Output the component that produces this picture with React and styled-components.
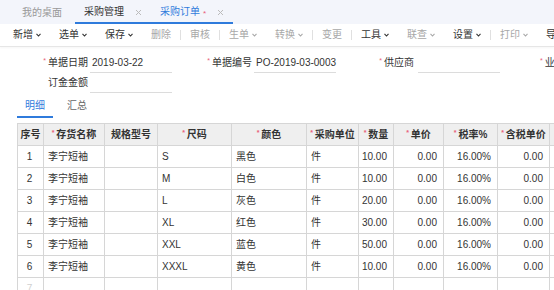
import React from 'react';
import styled, { createGlobalStyle } from 'styled-components';

const GlobalStyle = createGlobalStyle`
	html, body {
		margin: 0;
		padding: 0;
		background: #fff;
		overflow: hidden;
	}
	body {
		font-family: 'Liberation Sans', 'Noto Sans CJK SC', sans-serif;
		font-size: 10px;
		color: #333;
	}
`;

const COLS = '26px 61px 53px 74px 75px 52px 35px 50px 54px 52px 70px';

const Chevron = () => (
	<svg width="5" height="4" viewBox="0 0 5 4">
		<polyline points="0.5,0.8 2.5,3 4.5,0.8" fill="none" stroke="currentColor" strokeWidth="1.1" />
	</svg>
);

const Close = () => (
	<svg width="7" height="7" viewBox="0 0 7 7">
		<path d="M1 1 L6 6 M6 1 L1 6" stroke="#bbb" strokeWidth="1" />
	</svg>
);

const toolbar = [
	{ t: '新增', dd: true, on: true },
	{ t: '选单', dd: true, on: true },
	{ t: '保存', dd: true, on: true },
	{ t: '删除' },
	'sep',
	{ t: '审核' },
	'sep',
	{ t: '生单', dd: true },
	{ t: '转换', dd: true },
	'sep',
	{ t: '变更' },
	'sep',
	{ t: '工具', dd: true, on: true },
	{ t: '联查', dd: true },
	{ t: '设置', dd: true, on: true },
	'sep',
	{ t: '打印', dd: true },
	{ t: '导出', on: true },
];

const rows = [
	['1', '李宁短袖', '', 'S', '黑色', '件', '10.00', '0.00', '16.00%', '0.00'],
	['2', '李宁短袖', '', 'M', '白色', '件', '10.00', '0.00', '16.00%', '0.00'],
	['3', '李宁短袖', '', 'L', '灰色', '件', '20.00', '0.00', '16.00%', '0.00'],
	['4', '李宁短袖', '', 'XL', '红色', '件', '30.00', '0.00', '16.00%', '0.00'],
	['5', '李宁短袖', '', 'XXL', '蓝色', '件', '50.00', '0.00', '16.00%', '0.00'],
	['6', '李宁短袖', '', 'XXXL', '黄色', '件', '10.00', '0.00', '16.00%', '0.00'],
];

const heads = [
	{ t: '序号' },
	{ t: '存货名称', req: true },
	{ t: '规格型号' },
	{ t: '尺码', req: true },
	{ t: '颜色', req: true },
	{ t: '采购单位', req: true },
	{ t: '数量', req: true },
	{ t: '单价', req: true },
	{ t: '税率%', req: true },
	{ t: '含税单价', req: true },
	{ t: '含税金额', req: true },
];

const numeric = [6, 7, 8, 9, 10];

const App = () => {
	return (
		<>
			<GlobalStyle />
			<Page>
				<TabBar>
					<PageTab>我的桌面</PageTab>
					<TabGroup>
						<PageTab tone="dark">
							采购管理
							<Close />
						</PageTab>
						<PageTab tone="active">
							采购订单<Dot>*</Dot>
							<Close />
						</PageTab>
					</TabGroup>
				</TabBar>

				<Toolbar>
					{toolbar.map((it, i) =>
						it === 'sep' ? (
							<Sep key={i} />
						) : (
							<ToolButton key={i} on={it.on}>
								{it.t}
								{it.dd && <Chevron />}
							</ToolButton>
						)
					)}
				</Toolbar>

				<Form>
					<FormRow>
						<Field>
							<Label><Req>*</Req>单据日期</Label>
							<Input>2019-03-22</Input>
						</Field>
						<Field>
							<Label><Req>*</Req>单据编号</Label>
							<Input>PO-2019-03-0003</Input>
						</Field>
						<Field>
							<Label><Req>*</Req>供应商</Label>
							<Input wide />
						</Field>
						<Field>
							<Label align="left"><Req>*</Req>业务员</Label>
						</Field>
					</FormRow>
					<FormRow>
						<Field>
							<Label>订金金额</Label>
							<Input />
						</Field>
					</FormRow>
				</Form>

				<DetailTabs>
					<DetailTab active>明细</DetailTab>
					<DetailTab>汇总</DetailTab>
				</DetailTabs>

				<Grid>
					<HeadRow>
						{heads.map((h, i) => (
							<HeadCell key={i}>
								{h.req && <Req>*</Req>}
								{h.t}
							</HeadCell>
						))}
					</HeadRow>
					{rows.map((r) => (
						<Row key={r[0]}>
							{r.map((c, i) => (
								<Cell key={i} align={i === 0 ? 'center' : numeric.includes(i) ? 'right' : 'left'}>
									{c}
								</Cell>
							))}
							<Cell align="right">0.00</Cell>
						</Row>
					))}
					<Row>
						<Cell align="center" faint>7</Cell>
						{Array.from({ length: 10 }).map((_, i) => (
							<Cell key={i} />
						))}
					</Row>
				</Grid>
			</Page>
		</>
	);
};

export default App;

const Page = styled.div`
	width: 554px;
	height: 290px;
	overflow: hidden;
	background: #fff;
`;

const TabBar = styled.div`
	height: 24px;
	background: #f3f5fb;
	display: flex;
	align-items: stretch;
	padding-left: 13px;
	box-sizing: border-box;
`;

const TabGroup = styled.div`
	display: flex;
	margin-left: 4px;
	border-bottom: 2px solid #2f7bdc;
`;

const PageTab = styled.div`
	display: flex;
	align-items: center;
	gap: 9px;
	padding: 2px 9px 0;
	line-height: 12px;
	color: ${(p) => (p.tone === 'active' ? '#2f7bdc' : p.tone === 'dark' ? '#333' : '#999')};
	svg {
		margin-left: 2px;
	}
`;

const Dot = styled.span`
	color: #e9607a;
	font-size: 8px;
	margin-left: -6px;
	align-self: flex-start;
	margin-top: 6px;
`;

const Toolbar = styled.div`
	height: 22px;
	display: flex;
	align-items: center;
	padding-left: 4px;
	border-bottom: 1px solid #e6e6e6;
	box-shadow: 0 1px 2px rgba(0, 0, 0, 0.04);
	white-space: nowrap;
`;

const ToolButton = styled.div`
	display: flex;
	align-items: center;
	gap: 3px;
	padding: 0 9px;
	line-height: 12px;
	color: ${(p) => (p.on ? '#333' : '#a8a8a8')};
	flex-shrink: 0;
`;

const Sep = styled.div`
	width: 1px;
	height: 10px;
	background: #e0e0e0;
	flex-shrink: 0;
`;

const Form = styled.div`
	padding-top: 6px;
	display: flex;
	flex-direction: column;
`;

const FormRow = styled.div`
	display: flex;
	padding-left: 8px;
	height: 20px;
`;

const Field = styled.div`
	width: 164px;
	display: flex;
	align-items: stretch;
	flex-shrink: 0;
`;

const Label = styled.div`
	width: 80px;
	display: flex;
	align-items: center;
	justify-content: ${(p) => (p.align === 'left' ? 'flex-start' : 'flex-end')};
	padding-left: ${(p) => (p.align === 'left' ? '40px' : '0')};
	line-height: 12px;
	color: #333;
	white-space: nowrap;
`;

const Req = styled.span`
	color: #e9607a;
	font-size: 7px;
	margin-right: 2px;
	position: relative;
	top: -2px;
`;

const Input = styled.div`
	margin-left: ${(p) => (p.wide ? '4px' : '2px')};
	width: 82px;
	flex-shrink: 0;
	border-bottom: 1px solid #dcdcdc;
	display: flex;
	align-items: center;
	padding-left: 2px;
	box-sizing: border-box;
	line-height: 12px;
	color: #333;
	white-space: nowrap;
`;

const DetailTabs = styled.div`
	display: flex;
	gap: 6px;
	margin: 2px 0 0 17px;
	height: 23px;
`;

const DetailTab = styled.div`
	padding: 1px 8px 0;
	display: flex;
	align-items: center;
	line-height: 12px;
	color: ${(p) => (p.active ? '#2f7bdc' : '#666')};
	border-bottom: 2px solid ${(p) => (p.active ? '#2f7bdc' : 'transparent')};
`;

const Grid = styled.div`
	margin: 5px 0 0 17px;
	display: flex;
	flex-direction: column;
	width: max-content;
	border-top: 1px solid #d6d6d6;
	border-left: 1px solid #d6d6d6;
`;

const HeadRow = styled.div`
	display: grid;
	grid-template-columns: ${COLS};
	height: 22px;
	background: #efefef;
`;

const Row = styled.div`
	display: grid;
	grid-template-columns: ${COLS};
	height: 22px;
	background: #fff;
`;

const HeadCell = styled.div`
	display: flex;
	align-items: center;
	justify-content: center;
	border-right: 1px solid #d6d6d6;
	border-bottom: 1px solid #d6d6d6;
	font-weight: bold;
	color: #333;
	line-height: 12px;
	white-space: nowrap;
	overflow: hidden;
`;

const Cell = styled.div`
	display: flex;
	align-items: center;
	justify-content: ${(p) => (p.align === 'right' ? 'flex-end' : p.align === 'center' ? 'center' : 'flex-start')};
	padding: 0 6px 0 4px;
	border-right: 1px solid #d6d6d6;
	border-bottom: 1px solid #d6d6d6;
	line-height: 12px;
	color: ${(p) => (p.faint ? '#d0d0d0' : '#333')};
	white-space: nowrap;
	overflow: hidden;
`;
